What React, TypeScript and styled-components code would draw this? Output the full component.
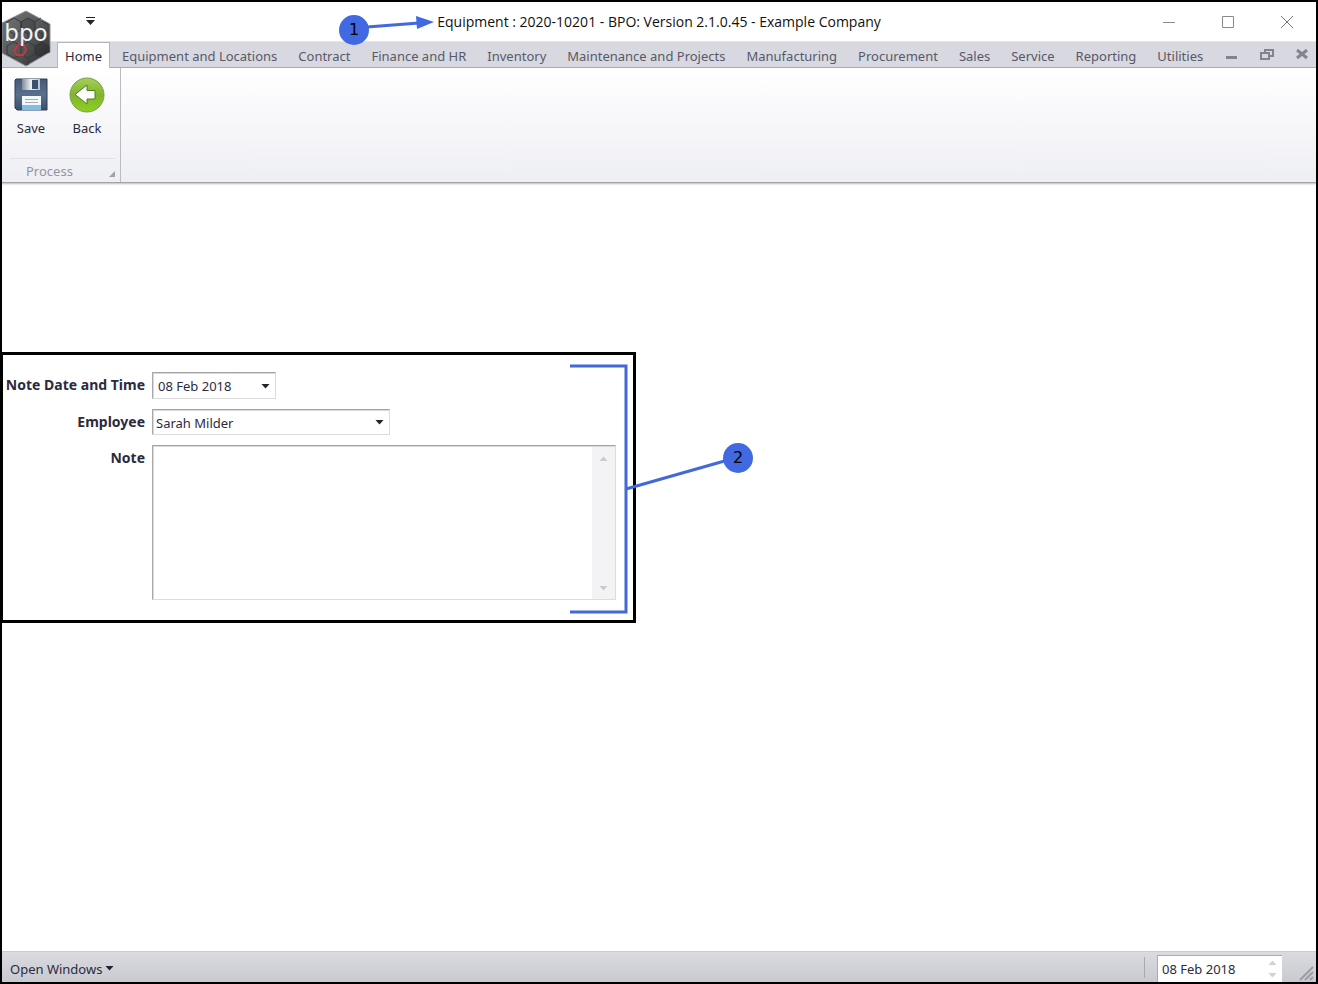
import React, { useState } from 'react';
import styled, { createGlobalStyle } from 'styled-components';

const GlobalStyle = createGlobalStyle`
  *, *::before, *::after { box-sizing: border-box; }
  body { margin: 0; background: #fff; }
  button, input, select, textarea { font: inherit; color: inherit; }
`;

const Frame = styled.div`
  display: flex;
  flex-direction: column;
  position: relative;
  min-height: 100vh;
  border: 2px solid #000;
  background: #fff;
  color: #2b2b3d;
  font-family: 'Noto Sans', 'Open Sans', sans-serif;
  font-size: 13px;
  line-height: 18px;
`;

const TitleBar = styled.header`
  display: grid;
  grid-template-columns: 1fr auto 1fr;
  align-items: center;
  height: 39px;
`;

const Title = styled.h1`
  position: relative;
  margin: 0;
  font-family: 'Open Sans', sans-serif;
  font-size: 14px;
  font-weight: 400;
  line-height: 20px;
  color: #111;
  white-space: nowrap;
`;

const IconButton = styled.button`
  display: flex;
  align-items: center;
  justify-content: center;
  padding: 0;
  border: 0;
  background: none;
`;

const QuickAccess = styled(IconButton)`
  width: 20px;
  height: 20px;
  margin: 0 0 2px 78px;
`;

const WindowButtons = styled.div`
  display: flex;
  justify-content: flex-end;
`;

const WindowButton = styled(IconButton)`
  width: 59px;
  height: 38px;
`;

const LogoButton = styled(IconButton)`
  position: absolute;
  left: 0;
  top: 8px;
`;

const TabBar = styled.nav`
  display: flex;
  height: 27px;
  padding-left: 55px;
  background: #d8d9e0;
  border-top: 1px solid #e6e6ea;
  border-bottom: 1px solid #a9aab5;
`;

const Tab = styled.a<{ $active?: boolean }>`
  display: flex;
  align-items: center;
  height: ${(p) => (p.$active ? 27 : 26)}px;
  padding: ${(p) => (p.$active ? '0 7px' : '2px 11px 0 10px')};
  margin-right: ${(p) => (p.$active ? 2 : 0)}px;
  border: solid #b4b5bf;
  border-width: ${(p) => (p.$active ? '1px 1px 0' : '0')};
  background: ${(p) => (p.$active ? '#fff' : 'transparent')};
  color: ${(p) => (p.$active ? '#2b2b3d' : '#585868')};
  text-decoration: none;
  white-space: nowrap;
`;

const ChildButtons = styled.div`
  display: flex;
  margin-left: auto;
`;

const ChildButton = styled(IconButton)`
  width: 35px;
  height: 26px;
`;

const Ribbon = styled.section`
  display: flex;
  height: 115px;
  background: linear-gradient(#fff, #fafafc 30%, #eeeff3);
  border-bottom: 1px solid #a2a3aa;
`;

const RibbonGroup = styled.div`
  display: flex;
  flex-direction: column;
  justify-content: space-between;
  width: 119px;
  border-right: 1px solid #b9bac2;
`;

const RibbonActions = styled.div`
  display: flex;
  padding-left: 1px;
`;

const RibbonButton = styled.button`
  display: flex;
  flex-direction: column;
  align-items: center;
  gap: 6px;
  width: 56px;
  padding: 9px 0 0;
  border: 0;
  background: none;
`;

const GroupCaption = styled.div`
  display: flex;
  align-items: center;
  justify-content: space-between;
  height: 24px;
  margin: 0 5px 0 8px;
  padding-left: 16px;
  border-top: 1px solid #e2e3e8;
  color: #94949e;
`;

const Launcher = styled.svg`
  width: 6px;
  height: 6px;
  margin-top: 6px;
`;

const Main = styled.main`
  flex: 1;
  padding-top: 169px;
  box-shadow: inset 0 2px 2px -1px #bcbcc2;
`;

const NotePanel = styled.form`
  position: relative;
  display: grid;
  grid-template-columns: 142px 464px;
  grid-template-rows: 27px 26px 155px;
  row-gap: 10px;
  column-gap: 7px;
  width: 636px;
  height: 271px;
  margin-left: -2px;
  padding-top: 17px;
  border: 3px solid #000;
`;

const Label = styled.label`
  padding-top: 3px;
  font-size: 14px;
  font-weight: 700;
  line-height: 20px;
  text-align: right;
  white-space: nowrap;
`;

const Field = styled.div<{ $width: number }>`
  display: flex;
  position: relative;
  width: ${(p) => p.$width}px;
  border: 1px solid;
  border-color: #a3a3a7 #dcdcdf #dcdcdf #a9a9ad;
  padding: 1px 0 0 1px;
  background: #fff;
  box-shadow: inset 1px 1px #d9d9dc;
`;

const TextInput = styled.input`
  flex: 1;
  min-width: 0;
  padding: 0 4px;
  border: 0;
  background: transparent;
  outline: none;
`;

const Select = styled.select`
  flex: 1;
  padding: 0 2px;
  border: 0;
  background: transparent;
  appearance: none;
  outline: none;
`;

const SelectCaret = styled.span`
  position: absolute;
  right: 0;
  top: 0;
  bottom: 0;
  display: flex;
  align-items: center;
  justify-content: center;
  width: 20px;
  pointer-events: none;
`;

const CaretButton = styled(IconButton)`
  width: 20px;
`;

const NoteText = styled.textarea`
  flex: 1;
  padding: 4px;
  border: 0;
  background: transparent;
  resize: none;
  outline: none;
  overflow: hidden;
`;

const ScrollTrack = styled.div`
  display: flex;
  flex-direction: column;
  justify-content: space-between;
  width: 23px;
  background: #f3f3f6;
`;

const ScrollButton = styled(IconButton)`
  height: 22px;
`;

const Overlay = styled.svg`
  position: absolute;
  overflow: visible;
  pointer-events: none;
`;

const TitleArrow = styled(Overlay)`
  left: -70px;
  top: 2px;
`;

const Bracket = styled(Overlay)`
  left: 567px;
  top: 9px;
`;

const Marker = styled.span`
  position: absolute;
  display: flex;
  align-items: center;
  justify-content: center;
  width: 30px;
  height: 30px;
  border-radius: 50%;
  background: #4169e1;
  color: #000;
  font-family: 'DejaVu Sans', sans-serif;
  font-size: 16px;
  line-height: 20px;
`;

const TitleMarker = styled(Marker)`
  left: -98px;
  top: 3px;
`;

const PanelMarker = styled(Marker)`
  left: 720px;
  top: 88px;
`;

const StatusBar = styled.footer`
  display: flex;
  align-items: stretch;
  justify-content: space-between;
  height: 31px;
  padding-top: 3px;
  border-top: 1px solid #cbcbd0;
  background: linear-gradient(#dadbe0, #c9cad1);
`;

const OpenWindows = styled.button`
  display: flex;
  align-items: center;
  gap: 3px;
  padding: 0 8px;
  border: 0;
  background: none;
`;

const StatusRight = styled.div`
  display: flex;
`;

const StatusDate = styled.div`
  display: flex;
  width: 125px;
  margin-left: 12px;
  border: solid #a9aab2;
  border-width: 1px 0 0 1px;
  background: #fff;
`;

const Separator = styled.span`
  width: 1px;
  margin: 2px 0 4px;
  background: #a7a8b2;
`;

const Spinner = styled.div`
  display: flex;
  flex-direction: column;
  width: 20px;
`;

const SpinButton = styled(IconButton)`
  flex: 1;
`;

const Grip = styled.svg`
  align-self: flex-end;
  width: 34px;
  height: 20px;
`;

const Caret = ({ up, color = '#222230' }: { up?: boolean; color?: string }) => (
  <svg width="9" height="5" viewBox="0 0 9 5" aria-hidden="true">
    <path d={up ? 'M.5 5 4.500 .5 8.500 5Z' : 'M.5 0H8.500L4.500 4.500Z'} fill={color} />
  </svg>
);

const Logo = () => (
  <svg width="50" height="58" viewBox="0 0 50 58" aria-hidden="true">
    <defs>
      <linearGradient id="hex" x1="0" y1="0" x2="1" y2="1">
        <stop offset="0" stopColor="#737476" />
        <stop offset=".5" stopColor="#57585a" />
        <stop offset="1" stopColor="#2c2d2f" />
      </linearGradient>
    </defs>
    <path d="M24 1 48 14V42L24 56 0 43V13Z" fill="url(#hex)" stroke="#8f9092" />
    <path
      d="M12 8l7 4v8l-7 4-7-4v-8zM26 8l7 4v8l-7 4-7-4v-8zM40 11l7 4M33 20l7 4 7-4M33 12l6-4M12 24v8M26 24v8M40 24v8M5 36l7-4 7 4v8l-7 4-7-4zM19 36l7-4 7 4v8l-7 4-7-4M33 36l7-4 7 4v7M26 48v7M33 44l6 3"
      fill="none"
      stroke="#3a3b3d"
    />
    <path d="M33 36l7-4 7 4v6l-8 5-6-3zM19 12l7-4 7 4v8l-7 4-7-4z" fill="#111" opacity=".2" />
    <path d="M17 34 22 35 24 40 21 45 15 45 12 41Z" fill="none" stroke="#c03a3c" strokeWidth="2" />
    <text x="24" y="31" textAnchor="middle" fontFamily="DejaVu Sans, sans-serif" fontSize="23" fill="#f2f2f3">bpo</text>
  </svg>
);

const SaveIcon = () => (
  <svg width="36" height="36" viewBox="0 0 36 36" aria-hidden="true">
    <defs>
      <linearGradient id="disk" x1="0" y1="0" x2="0" y2="1">
        <stop offset="0" stopColor="#465a76" />
        <stop offset=".5" stopColor="#5a6f8c" />
        <stop offset="1" stopColor="#3a506c" />
      </linearGradient>
      <linearGradient id="metal" x1="0" y1="0" x2="1" y2="0">
        <stop offset="0" stopColor="#7f8c9b" />
        <stop offset=".5" stopColor="#eef1f4" />
        <stop offset="1" stopColor="#b8c0c9" />
      </linearGradient>
    </defs>
    <path d="M3 2H34V33H4L2 31V3Z" fill="url(#disk)" stroke="#2d3e54" />
    <path d="M9 2H27V13H9Z" fill="url(#metal)" />
    <path d="M19 3H25V12H19Z" fill="#3b506d" />
    <path d="M9 19H28V33H9Z" fill="#f5f8fb" />
    <path d="M9 28H28V33H9Z" fill="#7fbde6" />
    <path d="M12 22.500H25M12 25.500H25" stroke="#a3adb8" />
  </svg>
);

const BackIcon = () => (
  <svg width="36" height="36" viewBox="0 0 36 36" aria-hidden="true">
    <defs>
      <linearGradient id="green" x1="0" y1="0" x2="0" y2="1">
        <stop offset="0" stopColor="#a5cf5a" />
        <stop offset=".5" stopColor="#7fb52c" />
        <stop offset="1" stopColor="#8ed020" />
      </linearGradient>
    </defs>
    <circle cx="18" cy="18" r="17" fill="url(#green)" stroke="#7a9f48" />
    <path d="M6 17.500 18 8V13.500H26V22H18V27Z" fill="#fff" stroke="#4f7d1c" strokeLinejoin="round" />
  </svg>
);

const tabs = [
  'Home',
  'Equipment and Locations',
  'Contract',
  'Finance and HR',
  'Inventory',
  'Maintenance and Projects',
  'Manufacturing',
  'Procurement',
  'Sales',
  'Service',
  'Reporting',
  'Utilities',
];

export default function App() {
  const [date, setDate] = useState('08 Feb 2018');
  const [note, setNote] = useState('');

  return (
    <Frame>
      <GlobalStyle />
      <TitleBar>
        <QuickAccess aria-label="Customize quick access toolbar">
          <svg width="9" height="8" viewBox="0 0 9 8" aria-hidden="true">
            <path d="M0 0H9V1H0ZM0 3H9L4.500 8Z" fill="#222230" />
          </svg>
        </QuickAccess>
        <Title>
          Equipment : 2020-10201 - BPO: Version 2.1.0.45 - Example Company
          <TitleArrow width="68" height="16" viewBox="0 0 68 16">
            <path d="M0 13 52 9" stroke="#4169e1" strokeWidth="3" />
            <path d="M49 2 67 8 50 15Z" fill="#4169e1" />
          </TitleArrow>
          <TitleMarker>1</TitleMarker>
        </Title>
        <WindowButtons>
          <WindowButton aria-label="Minimize">
            <svg width="12" height="12" stroke="#8a8a8a" fill="none"><path d="M0 6.500H12" /></svg>
          </WindowButton>
          <WindowButton aria-label="Maximize">
            <svg width="12" height="12" stroke="#8a8a8a" fill="none"><path d="M.5 .5H11.500V11.500H.5Z" /></svg>
          </WindowButton>
          <WindowButton aria-label="Close">
            <svg width="12" height="12" stroke="#777" fill="none"><path d="M0 0 12 12M12 0 0 12" /></svg>
          </WindowButton>
        </WindowButtons>
      </TitleBar>
      <TabBar>
        {tabs.map((name, i) => (
          <Tab key={name} href="#" $active={i === 0}>{name}</Tab>
        ))}
        <ChildButtons>
          <ChildButton aria-label="Minimize child window">
            <svg width="12" height="12"><path d="M0 7H11V10H0Z" fill="#83838f" /></svg>
          </ChildButton>
          <ChildButton aria-label="Restore child window">
            <svg width="14" height="12" fill="none" stroke="#83838f" strokeWidth="2">
              <path d="M5 4V1H13V7H10M1 4H9V10H1Z" />
            </svg>
          </ChildButton>
          <ChildButton aria-label="Close child window">
            <svg width="12" height="12" stroke="#83838f" strokeWidth="3"><path d="M1 1 11 9M11 1 1 9" /></svg>
          </ChildButton>
        </ChildButtons>
      </TabBar>
      <LogoButton aria-label="Application menu"><Logo /></LogoButton>
      <Ribbon>
        <RibbonGroup>
          <RibbonActions>
            <RibbonButton><SaveIcon />Save</RibbonButton>
            <RibbonButton><BackIcon />Back</RibbonButton>
          </RibbonActions>
          <GroupCaption>
            Process
            <Launcher viewBox="0 0 6 6" aria-hidden="true"><path d="M6 0V6H0Z" fill="#a0a0a8" /></Launcher>
          </GroupCaption>
        </RibbonGroup>
      </Ribbon>
      <Main>
        <NotePanel>
          <Label htmlFor="note-date">Note Date and Time</Label>
          <Field $width={124}>
            <TextInput id="note-date" value={date} onChange={(e) => setDate(e.target.value)} />
            <CaretButton type="button" aria-label="Open calendar"><Caret /></CaretButton>
          </Field>
          <Label htmlFor="employee">Employee</Label>
          <Field $width={238}>
            <Select id="employee"><option>Sarah Milder</option></Select>
            <SelectCaret><Caret /></SelectCaret>
          </Field>
          <Label htmlFor="note">Note</Label>
          <Field $width={464}>
            <NoteText id="note" value={note} onChange={(e) => setNote(e.target.value)} />
            <ScrollTrack>
              <ScrollButton type="button" aria-label="Scroll up"><Caret up color="#c9c9d0" /></ScrollButton>
              <ScrollButton type="button" aria-label="Scroll down"><Caret color="#c9c9d0" /></ScrollButton>
            </ScrollTrack>
          </Field>
          <Bracket width="160" height="250" viewBox="0 0 160 250">
            <path d="M0 2H56V248H0M56 125 158 96" fill="none" stroke="#4169d8" strokeWidth="3" />
          </Bracket>
          <PanelMarker>2</PanelMarker>
        </NotePanel>
      </Main>
      <StatusBar>
        <OpenWindows>Open Windows<Caret /></OpenWindows>
        <StatusRight>
          <Separator />
          <StatusDate>
            <TextInput aria-label="Working date" defaultValue="08 Feb 2018" />
            <Spinner>
              <SpinButton aria-label="Next day"><Caret up color="#d0d0d6" /></SpinButton>
              <SpinButton aria-label="Previous day"><Caret color="#d0d0d6" /></SpinButton>
            </Spinner>
          </StatusDate>
          <Grip viewBox="0 0 34 20" stroke="#9a9ba5" strokeWidth="2">
            <path d="M18 18 31 5M23 18 31 10M28 18 31 15" />
          </Grip>
        </StatusRight>
      </StatusBar>
    </Frame>
  );
}
